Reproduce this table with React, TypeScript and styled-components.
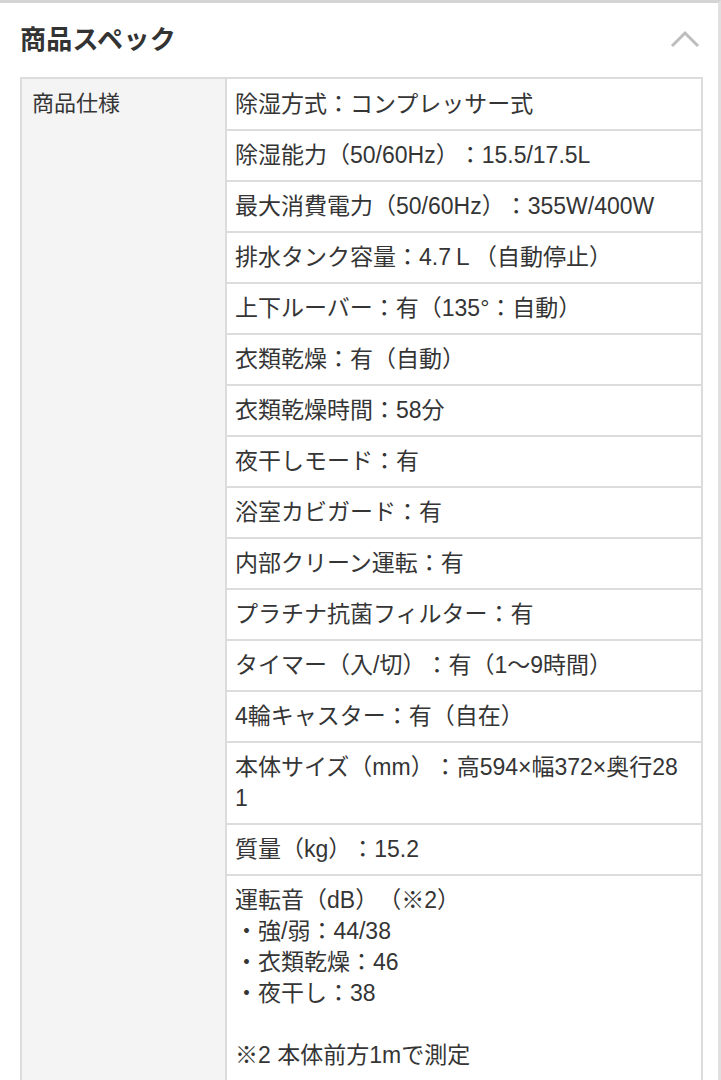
import React from "react";
import styled, { createGlobalStyle } from "styled-components";

const GlobalStyle = createGlobalStyle`
  html, body {
    margin: 0;
    padding: 0;
    background: #ffffff;
    overflow: hidden;
  }
  body {
    font-family: "Liberation Sans", "Noto Sans CJK JP", sans-serif;
    color: #353535;
    text-spacing-trim: space-all;
  }
`;

const Card = styled.section`
  width: 721px;
  height: 1080px;
  box-sizing: border-box;
  border-top: 3px solid #d4d4d4;
  border-right: 3px solid #e0e0e0;
  padding-right: 15px;
  background: #ffffff;
  overflow: hidden;
`;

const Header = styled.div`
  display: flex;
  align-items: center;
  justify-content: space-between;
  height: 68px;
  padding: 0 3px 0 20px;
  margin-bottom: 6px;
`;

const Title = styled.h2`
  margin: 0;
  font-family: "Noto Sans CJK JP", sans-serif;
  font-size: 26px;
  font-weight: 700;
  color: #333333;
  letter-spacing: 0.3px;
`;

const Chevron = styled.svg`
  width: 30px;
  height: 20px;
  margin-top: 4px;
`;

const Table = styled.div`
  display: grid;
  grid-template-columns: 205px 1fr;
  margin-left: 20px;
  border: 2px solid #dcdcdc;
  border-bottom: none;
`;

const LabelCell = styled.div`
  background: #f4f4f4;
  border-right: 2px solid #dcdcdc;
  padding: 9px 10px;
  font-size: 22px;
  line-height: 31px;
`;

const Values = styled.div`
  display: flex;
  flex-direction: column;
`;

const ValueCell = styled.div`
  border-bottom: 2px solid #dcdcdc;
  padding: 9px 14px 9px 8px;
  font-size: 23px;
  line-height: 31px;
  white-space: pre-wrap;
  word-break: break-all;
  &:first-child {
    padding-top: 10px;
  }
`;

const specs = [
  "除湿方式：コンプレッサー式",
  "除湿能力（50/60Hz）：15.5/17.5L",
  "最大消費電力（50/60Hz）：355W/400W",
  "排水タンク容量：4.7Ｌ（自動停止）",
  "上下ルーバー：有（135°：自動）",
  "衣類乾燥：有（自動）",
  "衣類乾燥時間：58分",
  "夜干しモード：有",
  "浴室カビガード：有",
  "内部クリーン運転：有",
  "プラチナ抗菌フィルター：有",
  "タイマー（入/切）：有（1〜9時間）",
  "4輪キャスター：有（自在）",
  "本体サイズ（mm）：高594×幅372×奥行281",
  "質量（kg）：15.2",
  "運転音（dB）（※2）\n・強/弱：44/38\n・衣類乾燥：46\n・夜干し：38\n\n※2 本体前方1mで測定",
];

const App = () => {
  return (
    <>
      <GlobalStyle />
      <Card>
        <Header>
          <Title>商品スペック</Title>
          <Chevron viewBox="0 0 30 20">
            <path
              d="M2 17 L15 4 L28 17"
              fill="none"
              stroke="#bdbdbd"
              strokeWidth="3"
            />
          </Chevron>
        </Header>
        <Table>
          <LabelCell>商品仕様</LabelCell>
          <Values>
            {specs.map((s) => (
              <ValueCell key={s}>{s}</ValueCell>
            ))}
          </Values>
        </Table>
      </Card>
    </>
  );
};

export default App;
